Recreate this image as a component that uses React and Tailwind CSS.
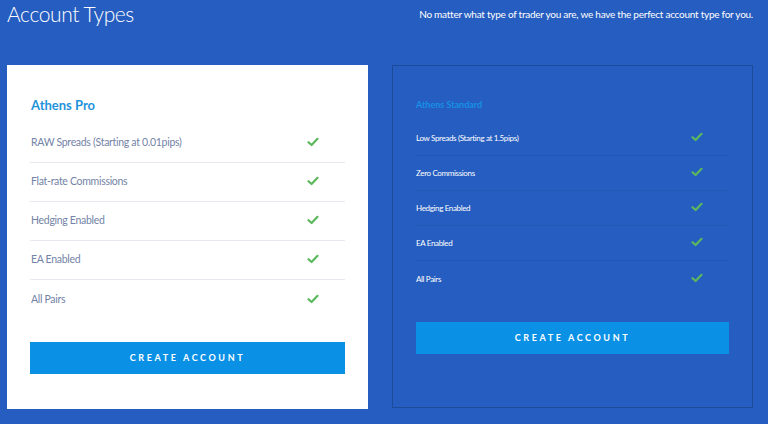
import React from "react";

const proFeatures = [
  "RAW Spreads (Starting at 0.01pips)",
  "Flat-rate Commissions",
  "Hedging Enabled",
  "EA Enabled",
  "All Pairs",
];

const standardFeatures = [
  "Low Spreads (Starting at 1.5pips)",
  "Zero Commissions",
  "Hedging Enabled",
  "EA Enabled",
  "All Pairs",
];

const Check = ({ className }) => (
  <svg viewBox="0 0 12 10" className={className} fill="none">
    <path d="M1.5 5.2 L4.6 8 L10.5 1.8" stroke="#5cb85c" strokeWidth="2.2" strokeLinecap="round" strokeLinejoin="round" />
  </svg>
);

const App = () => {
  return (
    <div
      className="w-full h-[424px] overflow-hidden bg-[#265dc0] text-white"
      style={{ fontFamily: "Lato, 'Open Sans', sans-serif" }}
    >
      {/* header */}
      <div className="flex items-start justify-between pl-[7px] pr-[15px] h-[65px]">
        <h1 className="text-[21px] leading-[28px] font-light tracking-[-0.4px]">Account Types</h1>
        <p className="text-[10px] leading-[14px] mt-[7px] tracking-[-0.25px]">
          No matter what type of trader you are, we have the perfect account type for you.
        </p>
      </div>

      <div className="flex gap-6 pl-[7px] pr-[15px]">
        {/* Athens Pro */}
        <div className="w-[361px] h-[344px] bg-white px-[23px] pt-[30px]">
          <h2 className="text-[13px] leading-[20px] font-bold text-[#1f93da] pl-[1px]">Athens Pro</h2>
          <ul className="mt-[9px]">
            {proFeatures.map((f, i) => (
              <li
                key={f}
                className={`flex items-center justify-between h-[39px] pl-[1px] pr-[26px] ${
                  i < proFeatures.length - 1 ? "border-b border-[#e6eaf0]" : ""
                }`}
              >
                <span className="text-[10.5px] text-[#7383a6] tracking-[-0.3px]">{f}</span>
                <Check className="w-[12px] h-[10px] mb-[2px]" />
              </li>
            ))}
          </ul>
          <button className="mt-[23px] w-full h-[32px] bg-[#0a91e6] text-white text-[9px] font-bold tracking-[2.6px]">
            CREATE ACCOUNT
          </button>
        </div>

        {/* Athens Standard */}
        <div className="w-[361px] h-[343px] border border-[#1d4a99] px-[23px] pt-[32px]">
          <h2 className="text-[9px] leading-[14px] font-bold text-[#1790e6]">Athens Standard</h2>
          <ul className="mt-[9px]">
            {standardFeatures.map((f, i) => (
              <li
                key={f}
                className={`flex items-center justify-between h-[35px] pr-[26px] ${
                  i < standardFeatures.length - 1 ? "border-b border-[#2357b6]" : ""
                }`}
              >
                <span className="text-[8px] tracking-[-0.35px]">{f}</span>
                <Check className="w-[12px] h-[10px] mb-[2px]" />
              </li>
            ))}
          </ul>
          <button className="mt-[26px] w-full h-[32px] bg-[#0a91e6] text-white text-[9px] font-bold tracking-[2.6px]">
            CREATE ACCOUNT
          </button>
        </div>
      </div>
    </div>
  );
};

export default App;
